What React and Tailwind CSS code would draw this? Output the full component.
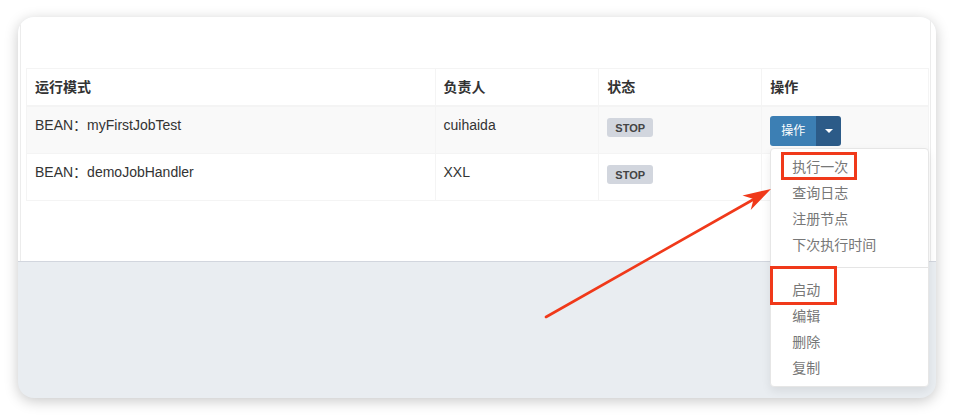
import React from 'react';

const FONT = { fontFamily: '"Liberation Sans", "Noto Sans CJK SC", Arial, sans-serif' };

const columns = [
  { key: 'mode', title: '运行模式', width: 'w-[409px]' },
  { key: 'owner', title: '负责人', width: 'w-[164px]' },
  { key: 'status', title: '状态', width: 'w-[163px]' },
  { key: 'ops', title: '操作', width: 'w-[167px]' },
];

const jobs = [
  { id: 1, mode: 'BEAN：myFirstJobTest', owner: 'cuihaida', status: 'STOP', striped: true, open: true },
  { id: 2, mode: 'BEAN：demoJobHandler', owner: 'XXL', status: 'STOP', striped: false, open: false },
];

const menuTop = ['执行一次', '查询日志', '注册节点', '下次执行时间'];
const menuBottom = ['启动', '编辑', '删除', '复制'];

const Badge = ({ children }) => (
  <span className="inline-block h-[19px] px-[8px] rounded-[3px] bg-[#d2d6de] text-[#444] text-[11px] font-bold leading-[20px]">
    {children}
  </span>
);

const ActionButton = ({ open }) => (
  <div className="relative mt-[1px] flex h-[30px] w-[71px]">
    <button className="h-full w-[46px] rounded-l-[3px] bg-[#3c7fb4] text-[12px] text-white">操作</button>
    <button className="flex h-full w-[25px] items-center justify-center rounded-r-[3px] bg-[#2c5b88]">
      <span className="block h-0 w-0 border-x-[4px] border-t-[4px] border-x-transparent border-t-white" />
    </button>

    {open && (
      <div className="absolute left-0 top-[32px] z-10 w-[159px] rounded-[4px] border border-[#e6e6e6] bg-white py-[5px] shadow-[0_4px_10px_rgba(0,0,0,0.08)]">
        {menuTop.map(item => (
          <div key={item} className="h-[26px] px-[21px] text-[14px] leading-[26px] text-[#777]">{item}</div>
        ))}
        <div className="my-[9px] h-px bg-[#e5e5e5]" />
        {menuBottom.map(item => (
          <div key={item} className="h-[26px] px-[21px] text-[14px] leading-[26px] text-[#777]">{item}</div>
        ))}
      </div>
    )}
  </div>
);

export default function App() {
  return (
    <div className="relative h-[416px] w-[954px] overflow-hidden bg-white pl-[18px] pt-[17px]" style={FONT}>
      {/* Window card */}
      <div className="h-[381px] w-[918px] overflow-hidden rounded-[16px] bg-[#e9edf1] shadow-[0_3px_14px_rgba(0,0,0,0.22)]">
        <div className="h-[245px] border-b border-[#d2d6de] bg-white">
          <div className="ml-[2px] h-full w-[911px] border-x border-[#ececec] pl-[5px] pt-[51px]">
            {/* Table */}
            <div className="w-[903px] border-t border-r border-[#f4f4f4] text-[14px] text-[#333]">
              <div className="flex h-[38px] border-b-2 border-[#f4f4f4]">
                {columns.map(col => (
                  <div key={col.key} className={`${col.width} border-l border-[#f4f4f4] px-[8px] pt-[8px] font-bold leading-[20px]`}>
                    {col.title}
                  </div>
                ))}
              </div>

              {jobs.map(job => (
                <div key={job.id} className={`flex h-[47px] border-b border-[#f4f4f4] ${job.striped ? 'bg-[#f9f9f9]' : 'bg-white'}`}>
                  <div className="w-[409px] border-l border-[#f4f4f4] px-[8px] pt-[8px] leading-[20px]">{job.mode}</div>
                  <div className="w-[164px] border-l border-[#f4f4f4] px-[8px] pt-[8px] leading-[20px]">{job.owner}</div>
                  <div className="w-[163px] border-l border-[#f4f4f4] px-[8px] pt-[10px]">
                    <Badge>{job.status}</Badge>
                  </div>
                  <div className={`w-[167px] border-l border-[#f4f4f4] px-[8px] pt-[8px] ${job.open ? 'relative z-10' : ''}`}>
                    {job.open && <ActionButton open />}
                  </div>
                </div>
              ))}
            </div>
          </div>
        </div>
      </div>

      {/* Annotations */}
      <div className="pointer-events-none absolute left-[781px] top-[152px] z-20 h-[28px] w-[76px] border-[3px] border-[#f0391a]" />
      <div className="pointer-events-none absolute left-[770px] top-[266px] z-20 h-[39px] w-[67px] border-[3px] border-[#f0391a]" />
      <svg className="pointer-events-none absolute left-0 top-0 z-20" width="954" height="416" viewBox="0 0 954 416">
        <line x1="546" y1="317" x2="756" y2="198" stroke="#f0391a" strokeWidth="2.6" strokeLinecap="round" />
        <polygon points="771,189 742.5,195.5 753.6,198.9 750.7,210" fill="#f0391a" />
      </svg>
    </div>
  );
}
